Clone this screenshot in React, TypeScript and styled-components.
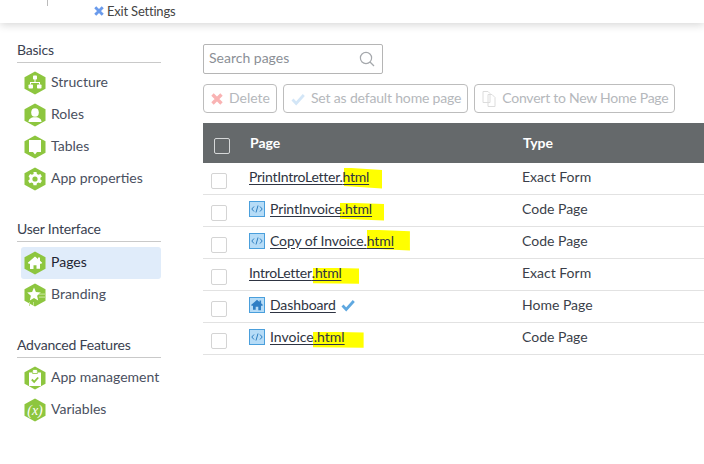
import React from "react";
import styled, { createGlobalStyle } from "styled-components";

const Global = createGlobalStyle`
  html, body { margin: 0; padding: 0; background: #fff; }
  body { font-family: Lato, "Liberation Sans", sans-serif; overflow: hidden; }
`;

const Page = styled.div`
  width: 704px;
  height: 464px;
  overflow: hidden;
  display: flex;
  flex-direction: column;
`;

const TopBar = styled.header`
  height: 23px;
  flex: none;
  background: #fff;
  box-shadow: 0 2px 8px rgba(0, 0, 0, 0.16);
  display: flex;
  align-items: flex-start;
  padding-left: 47px;
  position: relative;
`;

const Divider = styled.span`
  width: 1px;
  height: 6px;
  background: #bbb;
`;

const ExitLink = styled.span`
  margin-left: 46px;
  margin-top: 3px;
  display: flex;
  align-items: center;
  gap: 3px;
  font-size: 13px;
  line-height: 16px;
  letter-spacing: -0.2px;
  color: #444;
`;

const Body = styled.div`
  display: flex;
  flex: 1;
  min-height: 0;
`;

const Sidebar = styled.nav`
  width: 144px;
  margin-left: 17px;
  padding-top: 18px;
  flex: none;
`;

const Section = styled.section`
  display: flex;
  flex-direction: column;
  margin-bottom: 25px;
`;

const SectionTitle = styled.h3`
  margin: 0 0 4px;
  font-size: 14px;
  font-weight: 400;
  line-height: 17px;
  letter-spacing: -0.2px;
  padding-bottom: 4px;
  color: #3a4150;
  border-bottom: 1px solid #c9c9c9;
`;

const NavItem = styled.div<{ $active?: boolean }>`
  margin-left: 4px;
  margin-top: ${(p) => (p.$active ? "1px" : "0")};
  height: 32px;
  display: flex;
  align-items: center;
  gap: 5px;
  padding-left: 3px;
  font-size: 14px;
  white-space: nowrap;
  border-radius: 3px;
  background: ${(p) => (p.$active ? "#e0ecfa" : "transparent")};
  color: ${(p) => (p.$active ? "#1d2433" : "#4a5060")};
`;

const NavLabel = styled.span`
  margin-top: -4px;
`;

const Main = styled.main`
  margin-left: 42px;
  padding-top: 21px;
  flex: 1;
  min-width: 0;
`;

const SearchBox = styled.div`
  width: 180px;
  height: 30px;
  box-sizing: border-box;
  border: 1px solid #b5b5b5;
  border-radius: 2px;
  display: flex;
  align-items: center;
  justify-content: space-between;
  padding: 0 7px 0 5px;
  font-size: 14px;
  color: #8b8f96;
`;

const SearchLabel = styled.span`
  margin-top: -3px;
`;

const Toolbar = styled.div`
  display: flex;
  gap: 6px;
  margin-top: 10px;
`;

const ToolButton = styled.div<{ $spacing: number; $gap: number }>`
  height: 29px;
  box-sizing: border-box;
  border: 1px solid #bdbdbd;
  border-radius: 4px;
  display: flex;
  align-items: center;
  gap: ${(p) => p.$gap}px;
  padding: 0 6px 0 7px;
  font-size: 14px;
  letter-spacing: ${(p) => p.$spacing}px;
  color: #b5b8bc;
  white-space: nowrap;
`;

const ToolLabel = styled.span`
  margin-top: -3px;
`;

const Table = styled.div`
  margin-top: 10px;
`;

const Grid = styled.div`
  display: grid;
  grid-template-columns: 46px 273px 1fr;
  align-items: center;
`;

const HeadRow = styled(Grid)`
  height: 40px;
  background: #65696b;
  color: #fff;
  font-size: 14px;
  font-weight: 700;
`;

const Row = styled(Grid)`
  height: 32px;
  box-sizing: border-box;
  border-bottom: 1px solid #e2e2e2;
  font-size: 14px;
  color: #3b3f4a;
`;

const Check = styled.span<{ $head?: boolean }>`
  width: 16px;
  height: 16px;
  box-sizing: border-box;
  display: block;
  background: ${(p) => (p.$head ? "transparent" : "#fff")};
  border: 1px solid ${(p) => (p.$head ? "#d6d8d9" : "#d4d4d4")};
  border-radius: 2px;
  margin-left: ${(p) => (p.$head ? "11px" : "8px")};
  margin-top: ${(p) => (p.$head ? "6px" : "5px")};
`;

const HeadLabel = styled.span<{ $offset: number }>`
  margin-left: ${(p) => p.$offset}px;
  margin-top: -1px;
`;

const NameCell = styled.div`
  display: flex;
  align-items: center;
  gap: 5px;
  margin-top: -3px;
`;

const NameLink = styled.span<{ $spacing: number }>`
  color: #2e3442;
  margin-top: -2px;
  letter-spacing: ${(p) => p.$spacing}px;
  text-decoration: underline;
  text-underline-offset: 2px;
  white-space: nowrap;
  position: relative;
  z-index: 0;
`;

const Mark = styled.span<{ $left: number; $extra: number; $top: number; $bottom: number; $shape: string }>`
  position: relative;
  &::before {
    content: "";
    position: absolute;
    z-index: -1;
    left: ${(p) => p.$left}px;
    top: ${(p) => p.$top}px;
    bottom: ${(p) => p.$bottom}px;
    right: ${(p) => -p.$extra}px;
    background: #ffff00;
    clip-path: ${(p) => p.$shape};
  }
`;

const TypeCell = styled.span`
  margin-top: -5px;
`;

const Hex = ({ children }: { children: React.ReactNode }) => (
  <svg width="22" height="24" viewBox="0 0 22 24" style={{ flex: "none" }}>
    <path d="M11 0.5 L21.5 6.3 V17.7 L11 23.5 L0.5 17.7 V6.3 Z" fill="#8dc63f" />
    {children}
  </svg>
);

const icons: Record<string, React.ReactNode> = {
  structure: (
    <g fill="#fff">
      <rect x="9" y="4.500" width="4" height="4" rx="0.800" />
      <rect x="4.500" y="13.500" width="4.500" height="4" rx="0.800" />
      <rect x="13" y="13.500" width="4.500" height="4" rx="0.800" />
      <path d="M10.500 8h1v3h4.500v2.500h-1V12H7v1.500H6V11h4.500z" />
    </g>
  ),
  roles: (
    <g fill="#fff">
      <ellipse cx="11" cy="9.500" rx="3.800" ry="4.300" />
      <path d="M4.500 19c0-3.200 2.500-4.300 4.500-4.800h4c2 .5 4.500 1.600 4.500 4.800z" />
    </g>
  ),
  tables: <path fill="#fff" d="M5 5h12v12h-4L11 19.500 9 17H5z" />,
  props: (
    <g>
      <path
        fill="#fff"
        d="M9.500 5h3l.4 2 1.600.8 1.900-.9 1.500 2.500-1.500 1.400v1.600l1.500 1.400-1.500 2.500-1.900-.9-1.600.8-.4 2h-3l-.4-2-1.600-.8-1.900.9-1.500-2.500 1.500-1.400v-1.600L4.600 9.400l1.500-2.500 1.900.9 1.600-.8z"
      />
      <circle cx="11" cy="12" r="2.600" fill="#8dc63f" />
    </g>
  ),
  home: (
    <path
      fill="#fff"
      d="M11 5.500l3 2.600V6.500h2v3.300l2.200 2-.9 1H16v5h-3.500v-3.500h-3V18H6v-5.200H4.700l-.9-1z"
    />
  ),
  brand: (
    <g>
      <path fill="#fff" d="M10 4.500l1.900 4.600 4.900.4-3.700 3.200 1.100 4.800L10 15l-4.200 2.500 1.100-4.800-3.700-3.200 4.900-.4z" />
      <rect x="15" y="10.500" width="7" height="1.200" fill="#c4e296" />
      <rect x="15" y="13.500" width="7" height="1.200" fill="#c4e296" />
      <rect x="5" y="19" width="1" height="4" fill="#c4e296" />
      <rect x="9" y="19" width="1" height="4" fill="#c4e296" />
    </g>
  ),
  mgmt: (
    <g>
      <path fill="#fff" d="M5 6.500h3V5h6v1.500h3V20H5z" />
      <rect x="8.700" y="3.500" width="4.600" height="4" fill="#fff" stroke="#8dc63f" strokeWidth="0.800" />
      <path d="M7.800 13.500l2.400 2.400 4-4.400" fill="none" stroke="#8dc63f" strokeWidth="1.800" />
    </g>
  ),
  vars: (
    <text
      x="11"
      y="16.500"
      textAnchor="middle"
      fill="#fff"
      fontSize="14"
      fontStyle="italic"
      fontFamily="'Liberation Serif', serif"
    >
      (x)
    </text>
  ),
};

const CodeIcon = () => (
  <svg width="16" height="16" viewBox="0 0 16 16" style={{ flex: "none" }}>
    <rect x="0.500" y="0.500" width="15" height="15" fill="#b6dcf7" stroke="#4a9fdc" />
    <path d="M5 5.500L2.800 8 5 10.500M11 5.500L13.200 8 11 10.500" fill="none" stroke="#2f7fc0" strokeWidth="1" />
    <path d="M9 4.500L7 11.500" fill="none" stroke="#2f7fc0" strokeWidth="1" />
  </svg>
);

const HomeIcon = () => (
  <svg width="16" height="16" viewBox="0 0 16 16" style={{ flex: "none" }}>
    <rect x="0.500" y="0.500" width="15" height="15" fill="#b6dcf7" stroke="#4a9fdc" />
    <path fill="#2f7ec4" d="M8 2.800l2.500 2.100V3.600h1.600v2.700l1.900 1.700-.7.8H12v4.400H9.300V9.800H6.700v3H4V8.800H2.700L2 8z" />
  </svg>
);

const Tick = ({ color, size = 14 }: { color: string; size?: number }) => (
  <svg width={size} height={size} viewBox="0 0 14 14" style={{ flex: "none" }}>
    <path d="M1.500 7.500L5.200 11.500 12.800 3" fill="none" stroke={color} strokeWidth="2.800" />
  </svg>
);

const Cross = ({ color, size }: { color: string; size: number }) => (
  <svg width={size} height={size} viewBox="0 0 12 12" style={{ flex: "none" }}>
    <path d="M1.500 1.500L10.500 10.500M10.500 1.500L1.500 10.500" fill="none" stroke={color} strokeWidth="3.400" />
  </svg>
);

const nav = [
  {
    title: "Basics",
    items: [
      ["Structure", "structure"],
      ["Roles", "roles"],
      ["Tables", "tables"],
      ["App properties", "props"],
    ],
  },
  {
    title: "User Interface",
    items: [
      ["Pages", "home"],
      ["Branding", "brand"],
    ],
  },
  {
    title: "Advanced Features",
    items: [
      ["App management", "mgmt"],
      ["Variables", "vars"],
    ],
  },
];

const rows = [
  { base: "PrintIntroLetter.", mark: "html", icon: null, type: "Exact Form", spacing: -0.25, left: 1, extra: 13, top: 0, bottom: -4, shape: "polygon(0 0,100% 12%,100% 100%,0 88%)" },
  { base: "PrintInvoice", mark: ".html", icon: "code", type: "Code Page", spacing: -0.12, left: -2, extra: 12, top: 3, bottom: -4, shape: "polygon(0 0,100% 8%,100% 100%,0 90%)" },
  { base: "Copy of Invoice.", mark: "html", icon: "code", type: "Code Page", spacing: -0.1, left: 0, extra: 16, top: -2, bottom: -2, shape: "polygon(0 0,100% 8%,100% 100%,0 90%)" },
  { base: "IntroLetter", mark: ".html", icon: null, type: "Exact Form", spacing: -0.25, left: 1, extra: 18, top: 4, bottom: -4, shape: "polygon(0 0,100% 6%,100% 96%,0 92%)" },
  { base: "Dashboard", mark: "", icon: "home", type: "Home Page", spacing: -0.1, left: 0, extra: 0, top: 0, bottom: 0, shape: "none" },
  { base: "Invoice", mark: ".html", icon: "code", type: "Code Page", spacing: 0, left: -1, extra: 19, top: 4, bottom: -4, shape: "polygon(0 0,100% 6%,100% 96%,0 92%)" },
];

export default function App() {
  return (
    <Page>
      <Global />
      <TopBar>
        <Divider />
        <ExitLink>
          <Cross color="#6a9bec" size={10} />
          Exit Settings
        </ExitLink>
      </TopBar>
      <Body>
        <Sidebar>
          {nav.map((s) => (
            <Section key={s.title}>
              <SectionTitle>{s.title}</SectionTitle>
              {s.items.map(([label, key]) => (
                <NavItem key={label} $active={label === "Pages"}>
                  <Hex>{icons[key]}</Hex>
                  <NavLabel>{label}</NavLabel>
                </NavItem>
              ))}
            </Section>
          ))}
        </Sidebar>
        <Main>
          <SearchBox>
            <SearchLabel>Search pages</SearchLabel>
            <svg width="16" height="16" viewBox="0 0 16 16" fill="none" stroke="#a5a8ac" strokeWidth="1.200">
              <circle cx="7" cy="7" r="5.600" />
              <path d="M11 11l4 4" />
            </svg>
          </SearchBox>
          <Toolbar>
            <ToolButton $spacing={0} $gap={6}>
              <Cross color="#f9b3b3" size={12} />
              <ToolLabel>Delete</ToolLabel>
            </ToolButton>
            <ToolButton $spacing={-0.17} $gap={6}>
              <Tick color="#d3e6f7" />
              <ToolLabel>Set as default home page</ToolLabel>
            </ToolButton>
            <ToolButton $spacing={-0.25} $gap={5}>
              <svg width="15" height="16" viewBox="0 0 15 16" fill="none" stroke="#dcdcdc">
                <path d="M1 .5h5l2 2v9H1zM6 3.500h4l3 3v9H6z" fill="#fff" />
              </svg>
              <ToolLabel>Convert to New Home Page</ToolLabel>
            </ToolButton>
          </Toolbar>
          <Table>
            <HeadRow>
              <Check $head />
              <HeadLabel $offset={1}>Page</HeadLabel>
              <HeadLabel $offset={1}>Type</HeadLabel>
            </HeadRow>
            {rows.map((r) => (
              <Row key={r.base}>
                <Check />
                <NameCell>
                  {r.icon === "code" && <CodeIcon />}
                  {r.icon === "home" && <HomeIcon />}
                  <NameLink $spacing={r.spacing}>
                    {r.base}
                    {r.mark && (
                      <Mark $left={r.left} $extra={r.extra} $top={r.top} $bottom={r.bottom} $shape={r.shape}>
                        {r.mark}
                      </Mark>
                    )}
                  </NameLink>
                  {r.icon === "home" && <Tick color="#5fa8e0" />}
                </NameCell>
                <TypeCell>{r.type}</TypeCell>
              </Row>
            ))}
          </Table>
        </Main>
      </Body>
    </Page>
  );
}
